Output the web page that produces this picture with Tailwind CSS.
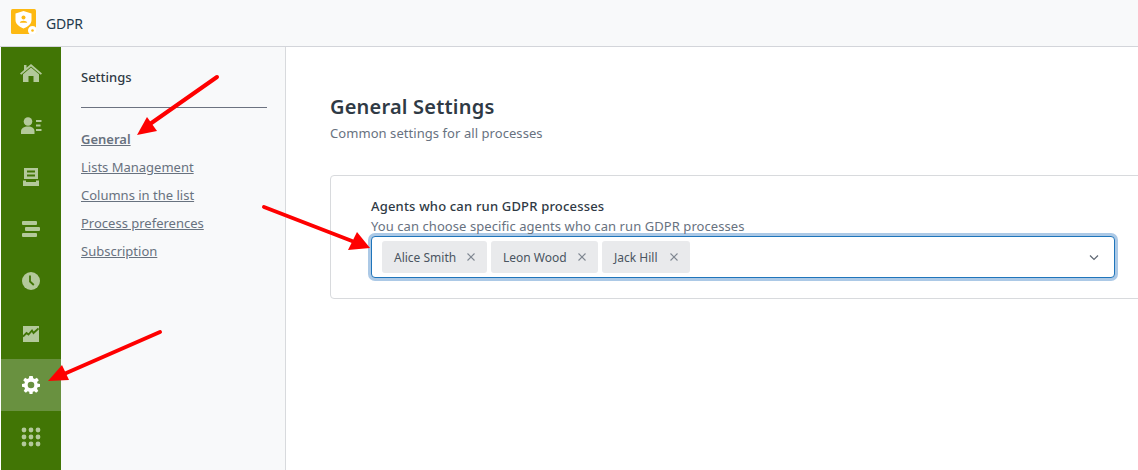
<!DOCTYPE html>
<html>
<head>
<meta charset="utf-8">
<script src="https://cdn.jsdelivr.net/npm/@tailwindcss/browser@4"></script>
</head>
<body class="bg-white overflow-hidden">
<div class="relative w-[1138px] h-[470px] overflow-hidden font-['Noto_Sans',sans-serif] flex flex-col">
  <header class="h-[47px] shrink-0 bg-[#f8f9fa] border-b border-[#d3d5da] flex items-center pl-[11px] gap-[10px]">
    <svg class="w-[25px] h-[25px] -mt-[3px]" viewBox="0 0 25 25">
      <rect width="25" height="25" rx="1.500" fill="#fdb913"/>
      <path d="M12.500 2 L20.500 4.500 V11 C20.500 15 17 17.500 12.500 19.500 C8 17.500 4.500 15 4.500 11 V4.500 Z" fill="#fff"/>
      <circle cx="12.500" cy="8.500" r="2" fill="#fdb913"/>
      <path d="M8.800 13.800 C8.800 11 16.200 11 16.200 13.800 Z" fill="#fdb913"/>
      <circle cx="21.500" cy="21.500" r="4.500" fill="#fff"/>
      <circle cx="21.500" cy="21.500" r="1.300" fill="#fdb913"/>
    </svg>
    <span class="text-[14px] tracking-[-0.2px] text-[#1f3a4d]">GDPR</span>
  </header>
  <div class="flex flex-1 min-h-0">
    <nav class="w-[61px] shrink-0 border-l border-white bg-[#417505] flex flex-col text-[#b3c99b]">
      <a class="h-[52px] flex items-center justify-center"><svg class="w-[22px] h-[18px]" viewBox="0 0 22 18" fill="currentColor"><path d="M11 0 L22 9.500 L20.800 10.800 L11 2.500 L1.200 10.800 L0 9.500 L4 6 V1 H6.500 V3.800 Z"/><path d="M11 3.500 L19 10.300 V18 H13.500 V12 H8.500 V18 H3 V10.300 Z"/></svg></a>
      <a class="h-[52px] flex items-center justify-center"><svg class="w-[21px] h-[17px]" viewBox="0 0 21 17" fill="currentColor"><circle cx="7" cy="4.500" r="4.300"/><path d="M0 17 V14.500 C0 11 3 9.500 7 9.500 C11 9.500 13.500 11 13.500 14.500 V17 Z"/><rect x="15" y="3" width="5.500" height="2"/><rect x="15" y="7.500" width="4.500" height="2"/><rect x="15" y="12" width="5.500" height="2"/></svg></a>
      <a class="h-[52px] flex items-center justify-center"><svg class="w-[16px] h-[18px]" viewBox="0 0 16 18" fill="currentColor"><path fill-rule="evenodd" d="M1 0 H15 V11 H1 Z M4 2.500 V4.500 H12 V2.500 Z M4 6.500 V8.500 H12 V6.500 Z"/><path d="M0 12.500 H3 V14 H13 V12.500 H16 V18 H0 Z"/></svg></a>
      <a class="h-[52px] flex items-center justify-center"><svg class="w-[18px] h-[16px]" viewBox="0 0 18 16" fill="currentColor"><rect x="0" y="0" width="15" height="4" rx="1"/><rect x="3" y="6" width="15" height="4" rx="1"/><rect x="0" y="12" width="15" height="4" rx="1"/></svg></a>
      <a class="h-[52px] flex items-center justify-center"><svg class="w-[18px] h-[18px]" viewBox="0 0 18 18"><circle cx="9" cy="9" r="9" fill="currentColor"/><path d="M8 3.500 V9.500 L11.800 13" fill="none" stroke="#417505" stroke-width="1.800"/></svg></a>
      <a class="h-[52px] flex items-center justify-center pt-[2px]"><svg class="w-[16px] h-[16px]" viewBox="0 0 16 16"><rect width="16" height="16" fill="currentColor"/><path d="M0 10.500 L3.500 7 L5.500 8.500 L9 4.500 L10.500 7 L15.500 2.500" fill="none" stroke="#417505" stroke-width="1.800"/></svg></a>
      <a class="h-[52px] flex items-center justify-center bg-[#699140] text-white"><svg class="w-[18px] h-[18px]" viewBox="0 0 18 18"><path fill="currentColor" fill-rule="evenodd" d="M7.300 0 H10.700 L11.200 2.300 L12.800 3 L14.900 1.800 L16.800 4.300 L15.100 5.900 L15.500 7.600 L18 8 V10.800 L15.600 11.300 L15 12.800 L16.300 14.900 L14.100 16.800 L12.400 15.200 L10.800 15.800 L10.500 18 H7.500 L7.200 15.800 L5.600 15.200 L3.900 16.800 L1.700 14.900 L3 12.800 L2.400 11.300 L0 10.800 V8 L2.500 7.600 L2.900 5.900 L1.200 4.300 L3.100 1.800 L5.200 3 L6.800 2.300 Z M9 5.700 A3.300 3.300 0 1 0 9 12.300 A3.300 3.300 0 1 0 9 5.700 Z"/></svg></a>
      <a class="h-[52px] flex items-center justify-center"><svg class="w-[20px] h-[20px]" viewBox="0 0 20 20" fill="currentColor"><circle cx="3" cy="3" r="2.400"/><circle cx="10" cy="3" r="2.400"/><circle cx="17" cy="3" r="2.400"/><circle cx="3" cy="10" r="2.400"/><circle cx="10" cy="10" r="2.400"/><circle cx="17" cy="10" r="2.400"/><circle cx="3" cy="17" r="2.400"/><circle cx="10" cy="17" r="2.400"/><circle cx="17" cy="17" r="2.400"/></svg></a>
    </nav>
    <aside class="w-[225px] shrink-0 bg-[#f8f9fa] border-r border-[#d8dadd] pl-[20px] pr-[18px]">
      <div class="h-[61px] pt-[20px] border-b border-[#6c7280] text-[13px] leading-[20px] font-medium text-[#2f3a45]">Settings</div>
      <ul class="mt-[17px] flex flex-col text-[13px] leading-[28px] text-[#68727f]">
        <li class="font-semibold underline">General</li>
        <li class="underline">Lists Management</li>
        <li class="underline">Columns in the list</li>
        <li class="underline">Process preferences</li>
        <li class="underline">Subscription</li>
      </ul>
    </aside>
    <main class="flex-1 min-w-0 pl-[44px]">
      <h1 class="mt-[44px] text-[20px] leading-[32px] font-semibold tracking-[0.2px] text-[#2f3a45]">General Settings</h1>
      <p class="text-[13px] leading-[20px] tracking-[0.06px] text-[#68727f]">Common settings for all processes</p>
      <section class="mt-[32px] h-[124px] w-[830px] border border-[#d8dadd] rounded-[4px] pl-[40px] pt-[20px] pr-[22px]">
        <div class="text-[13px] leading-[20px] font-medium tracking-[0.18px] text-[#2f3a45]">Agents who can run GDPR processes</div>
        <div class="text-[13px] leading-[20px] tracking-[0.07px] text-[#68727f]">You can choose specific agents who can run GDPR processes</div>
        <div class="h-[42px] w-[744px] rounded-[4px] border border-[#1f75bb] ring-[3px] ring-[#acc9e6] bg-white flex items-center pl-[10px] pr-[15px] gap-[4px] text-[12px] text-[#4a5561]">
          <span class="h-[32px] w-[105px] rounded-[3px] bg-[#e9eaec] flex items-center justify-between pl-[12px] pr-[11px]"><span class="pt-[2px]">Alice Smith</span><svg class="w-[10px] h-[10px]" viewBox="0 0 10 10"><path d="M1.500 1.500 L8.500 8.500 M8.500 1.500 L1.500 8.500" stroke="#7f8791" stroke-width="1.100"/></svg></span>
          <span class="h-[32px] w-[107px] rounded-[3px] bg-[#e9eaec] flex items-center justify-between pl-[12px] pr-[11px]"><span class="pt-[2px]">Leon Wood</span><svg class="w-[10px] h-[10px]" viewBox="0 0 10 10"><path d="M1.500 1.500 L8.500 8.500 M8.500 1.500 L1.500 8.500" stroke="#7f8791" stroke-width="1.100"/></svg></span>
          <span class="h-[32px] w-[88px] rounded-[3px] bg-[#e9eaec] flex items-center justify-between pl-[12px] pr-[11px]"><span class="pt-[2px]">Jack Hill</span><svg class="w-[10px] h-[10px]" viewBox="0 0 10 10"><path d="M1.500 1.500 L8.500 8.500 M8.500 1.500 L1.500 8.500" stroke="#7f8791" stroke-width="1.100"/></svg></span>
          <svg class="ml-auto w-[10px] h-[7px]" viewBox="0 0 10 7"><path d="M1 1.500 L5 5.500 L9 1.500" fill="none" stroke="#5f6873" stroke-width="1.200"/></svg>
        </div>
      </section>
    </main>
  </div>
  <svg class="absolute inset-0 pointer-events-none" width="1138" height="470" viewBox="0 0 1138 470">
    <g stroke="#fe0000" stroke-width="4" stroke-linecap="round" fill="#fe0000">
      <path d="M217 77 L150 124"/>
      <path d="M264 207 L352 241"/>
      <path d="M160 332 L64 374"/>
    </g>
    <g fill="#fe0000">
      <path d="M137 135 L147 117 L157 131 Z"/>
      <path d="M370 248 L348 250 L357 232 Z"/>
      <path d="M48 381 L62 365 L69 380 Z"/>
    </g>
  </svg>
</div>
</body>
</html>
